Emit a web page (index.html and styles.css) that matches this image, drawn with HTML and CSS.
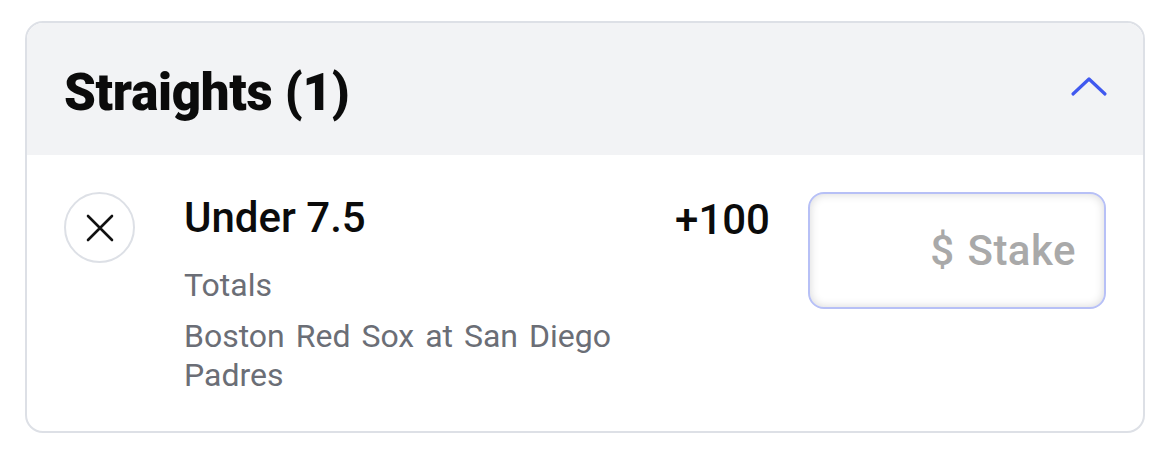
FILE: index.html
```html
<!DOCTYPE html>
<html>
<head>
<meta charset="utf-8">
<link rel="stylesheet" href="styles.css">
</head>
<body>
<div class="wrap">
  <section class="card">
    <header class="header">
      <h2 class="title">Straights (1)</h2>
      <svg class="chevron" width="38" height="22" viewBox="0 0 38 22"><polyline points="3,19 19,4 35,19" fill="none" stroke="#4059ef" stroke-width="3.2" stroke-linecap="round" stroke-linejoin="round"/></svg>
    </header>
    <div class="row">
      <button class="close" type="button">
        <svg width="30" height="30" viewBox="0 0 30 30"><path d="M3 3 L27 27 M27 3 L3 27" stroke="#111" stroke-width="2.6" stroke-linecap="round"/></svg>
      </button>
      <div class="info">
        <div class="pick">Under 7.5</div>
        <div class="market">Totals</div>
        <div class="event">Boston Red Sox at San Diego Padres</div>
      </div>
      <div class="odds">+100</div>
      <div class="stake"><span class="placeholder">$ Stake</span></div>
    </div>
  </section>
</div>
</body>
</html>
```
FILE: styles.css
```css
html, body { margin: 0; padding: 0; background: #fff; }
body { font-family: Roboto, "Liberation Sans", sans-serif; color: #111; }
.wrap { padding: 21px 25px 0 25px; width: 1120px; }
.card {
  border: 2px solid #dde0e6;
  border-radius: 18px;
  overflow: hidden;
  background: #fff;
}
.header {
  background: #f2f3f5;
  height: 132px;
  display: flex;
  align-items: center;
  justify-content: space-between;
  padding: 0 35px 0 37px;
}
.title {
  margin: 0;
  font-size: 51px;
  font-weight: 900;
  letter-spacing: -0.3px;
  color: #0b0b0b;
  line-height: 1;
  padding-top: 6px;
}
.chevron { display: block; margin-top: -6px; }
.row {
  display: flex;
  align-items: flex-start;
  padding: 37px 37px 36px 37px;
}
.close {
  width: 71px; height: 71px;
  border-radius: 50%;
  border: 2px solid #dde0e6;
  background: #fff;
  display: flex; align-items: center; justify-content: center;
  padding: 0;
  flex: none;
}
.close svg { display: block; }
.info { flex: 1; margin-left: 49px; }
.pick {
  font-size: 42px; font-weight: 500; line-height: 48px; margin-top: 2px; color: #0b0b0b;
}
.market, .event {
  font-size: 32px; font-weight: 400; color: #6b6e76; line-height: 39px; word-spacing: 3px;
}
.market { margin-top: 24px; }
.event { margin-top: 12px; }
.odds {
  font-size: 42px; font-weight: 500; line-height: 48px; color: #0b0b0b;
  margin-right: 38px; margin-top: 4px;
}
.stake {
  width: 298px; height: 117px; box-sizing: border-box;
  border: 2.5px solid #b7c0f6;
  border-radius: 16px;
  box-shadow: inset 0 0 10px rgba(0,0,0,0.16);
  display: flex; align-items: center; justify-content: flex-end;
  padding-right: 28px;
  flex: none;
}
.placeholder { font-size: 42px; font-weight: 500; color: #a9a9a9; letter-spacing: 0.5px; word-spacing: 2px; }
```
